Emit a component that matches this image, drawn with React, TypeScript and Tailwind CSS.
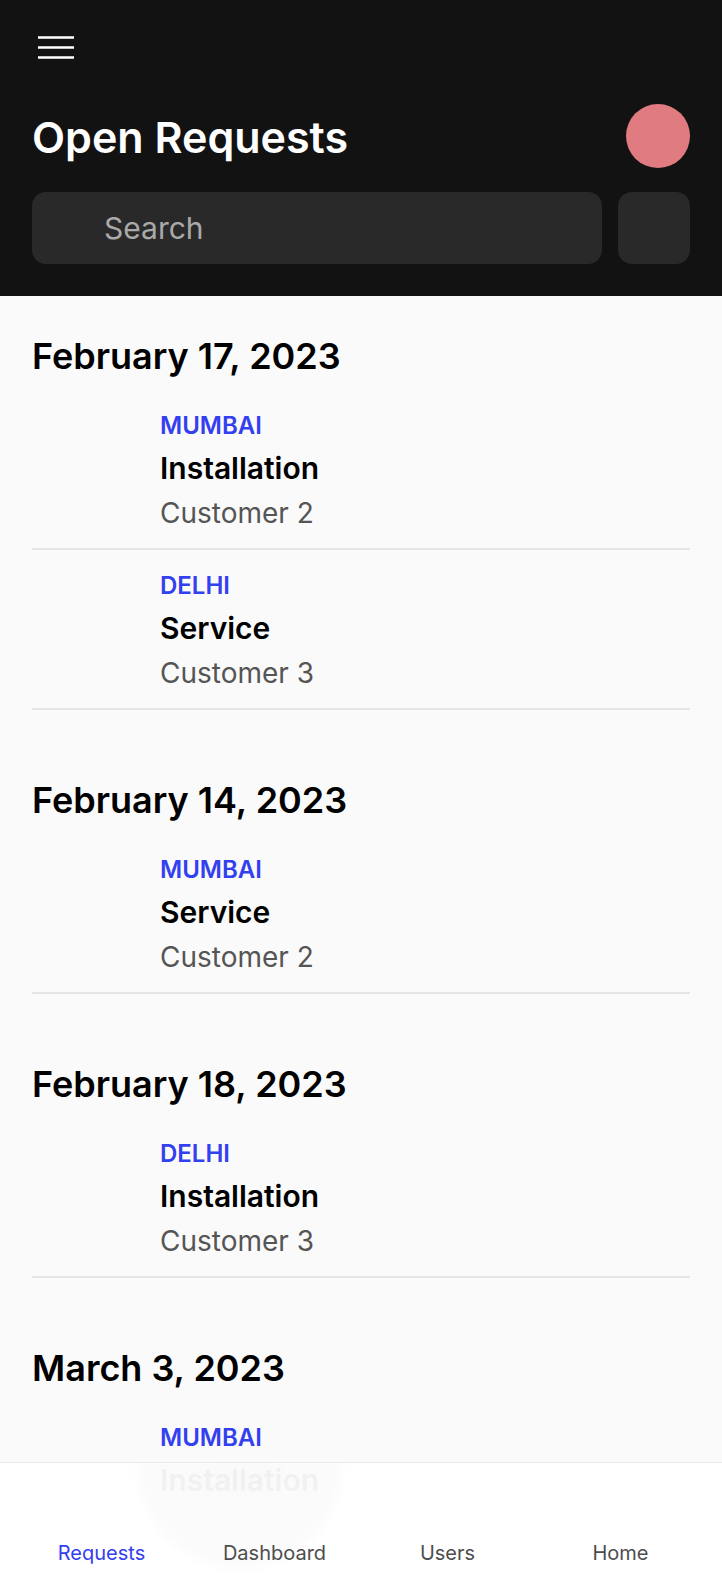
import React from "react";

type Item = { city: string; type: string; customer: string };
type Group = { date: string; items: Item[] };

const groups: Group[] = [
  {
    date: "February 17, 2023",
    items: [
      { city: "MUMBAI", type: "Installation", customer: "Customer 2" },
      { city: "DELHI", type: "Service", customer: "Customer 3" },
    ],
  },
  {
    date: "February 14, 2023",
    items: [{ city: "MUMBAI", type: "Service", customer: "Customer 2" }],
  },
  {
    date: "February 18, 2023",
    items: [{ city: "DELHI", type: "Installation", customer: "Customer 3" }],
  },
  {
    date: "March 3, 2023",
    items: [{ city: "MUMBAI", type: "Installation", customer: "Customer 2" }],
  },
];

export default function App() {
  return (
    <div
      className="relative h-[1592px] w-full overflow-hidden bg-[#fafafa]"
      style={{ fontFamily: "Inter, 'Noto Sans', sans-serif" }}
    >
      <header className="bg-[#121212] px-[32px] pt-[26px] pb-[32px]">
        <div className="flex h-[44px] items-center">
          <svg width="36" height="44" viewBox="0 0 36 44" className="ml-[6px]">
            <line x1="0" y1="11.5" x2="36" y2="11.5" stroke="#ffffff" strokeWidth="2.5" />
            <line x1="0" y1="21.5" x2="36" y2="21.5" stroke="#ffffff" strokeWidth="2.5" />
            <line x1="0" y1="31.5" x2="36" y2="31.5" stroke="#ffffff" strokeWidth="2.5" />
          </svg>
        </div>
        <div className="mt-[34px] flex h-[64px] items-center justify-between">
          <h1 className="pt-[2px] text-[43px] leading-[52px] font-semibold text-white">Open Requests</h1>
          <div className="h-[64px] w-[64px] rounded-full bg-[#e07b81]" />
        </div>
        <div className="mt-[24px] flex gap-[16px]">
          <div className="flex h-[72px] flex-1 items-center rounded-[14px] bg-[#292929] pl-[72px]">
            <span className="text-[30px] leading-[36px] text-[#a9a9a9]">Search</span>
          </div>
          <div className="h-[72px] w-[72px] rounded-[14px] bg-[#292929]" />
        </div>
      </header>

      <main className="flex flex-col gap-[70px] px-[32px] pt-[40px]">
        {groups.map((g) => (
          <section key={g.date}>
            <h2 className="mb-[14px] text-[36px] leading-[40px] font-semibold text-black">{g.date}</h2>
            {g.items.map((it, i) => (
              <div key={i} className="border-b-2 border-[#e5e5e5] pt-[20px] pb-[17px] pl-[128px]">
                <div className="text-[24px] leading-[32px] font-semibold text-[#3340f0]">{it.city}</div>
                <div className="mt-[8px] text-[30px] leading-[36px] font-semibold text-black">{it.type}</div>
                <div className="mt-[9px] text-[28px] leading-[36px] text-[#555555]">{it.customer}</div>
              </div>
            ))}
          </section>
        ))}
      </main>

      <nav
        className="absolute bottom-0 left-0 right-0 h-[130px] overflow-hidden border-t border-[#ebebeb] px-[15px]"
        style={{
          background:
            "linear-gradient(to bottom, rgba(255,255,255,0.955) 0px, rgba(255,255,255,0.965) 30px, rgba(255,255,255,1) 50px)",
        }}
      >
        <div
          className="pointer-events-none absolute left-[132px] top-[-104px] h-[216px] w-[216px] rounded-full"
          style={{ background: "radial-gradient(circle, rgba(0,0,0,0.02) 0%, rgba(0,0,0,0.016) 62%, rgba(0,0,0,0) 71%)" }}
        />
        <div className="relative grid grid-cols-4 pt-[78px]">
          <div className="text-center text-[20px] leading-[24px] text-[#3340f0]">Requests</div>
          <div className="text-center text-[20px] leading-[24px] text-[#4d4d4d]">Dashboard</div>
          <div className="text-center text-[20px] leading-[24px] text-[#4d4d4d]">Users</div>
          <div className="text-center text-[20px] leading-[24px] text-[#4d4d4d]">Home</div>
        </div>
      </nav>
    </div>
  );
}
